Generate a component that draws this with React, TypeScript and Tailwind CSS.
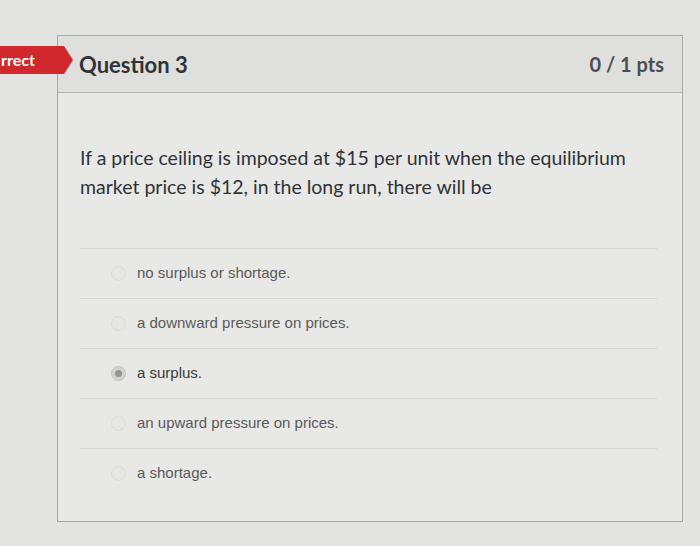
const options = [
  { label: "no surplus or shortage.", selected: false },
  { label: "a downward pressure on prices.", selected: false },
  { label: "a surplus.", selected: true },
  { label: "an upward pressure on prices.", selected: false },
  { label: "a shortage.", selected: false },
];

function Radio({ selected }: { selected: boolean }) {
  if (selected) {
    return (
      <span className="flex h-[15px] w-[15px] items-center justify-center rounded-full border border-[#c2c2c0] bg-[#d3d3d1]">
        <span className="h-[7px] w-[7px] rounded-full bg-[#959593]" />
      </span>
    );
  }
  return <span className="h-[15px] w-[15px] rounded-full border border-[#dadad8] bg-[#e6e6e4]" />;
}

export default function App() {
  return (
    <div className="relative h-[546px] w-[700px] overflow-hidden bg-[#e3e3e1] pt-[35px] font-['Lato',sans-serif]">
      {/* incorrect badge, cut off at the left edge of the shot */}
      <div className="absolute left-0 top-[46px] z-10 flex h-[28px] items-center">
        <div className="flex h-full w-[64px] items-center bg-[#d0282c] pl-[1px]">
          <span className="whitespace-nowrap text-[16px] font-bold text-white">rrect</span>
        </div>
        <div className="h-0 w-0 border-y-[14px] border-l-[9px] border-y-transparent border-l-[#d0282c]" />
      </div>

      <div className="ml-[57px] flex h-[487px] w-[626px] flex-col border border-[#a9a9a7] bg-[#e8e8e6]">
        <div className="flex h-[57px] shrink-0 items-center justify-between border-b border-[#b2b2b0] bg-[#dfdfdd] pl-[21px] pr-[18px]">
          <span className="text-[22px] font-bold text-[#2f3438]">Question 3</span>
          <span className="text-[20px] font-bold text-[#4a4e52]">0 / 1 pts</span>
        </div>

        <div className="pl-[22px] pr-[25px] pt-[50px]">
          <p className="whitespace-nowrap text-[19.5px] leading-[29px] text-[#2f3438]">
            If a price ceiling is imposed at $15 per unit when the equilibrium
            <br />
            market price is $12, in the long run, there will be
          </p>

          <div className="mt-[47px]">
            {options.map((o) => (
              <div
                key={o.label}
                className="flex h-[50px] items-center gap-[11px] border-t border-[#d5d5d3] pl-[31px]"
              >
                <Radio selected={o.selected} />
                <span
                  className={`font-['Liberation_Sans',Arial,sans-serif] text-[15px] ${o.selected ? "text-[#3a3a3a]" : "text-[#5a5a5a]"}`}
                >
                  {o.label}
                </span>
              </div>
            ))}
          </div>
        </div>
      </div>
    </div>
  );
}
